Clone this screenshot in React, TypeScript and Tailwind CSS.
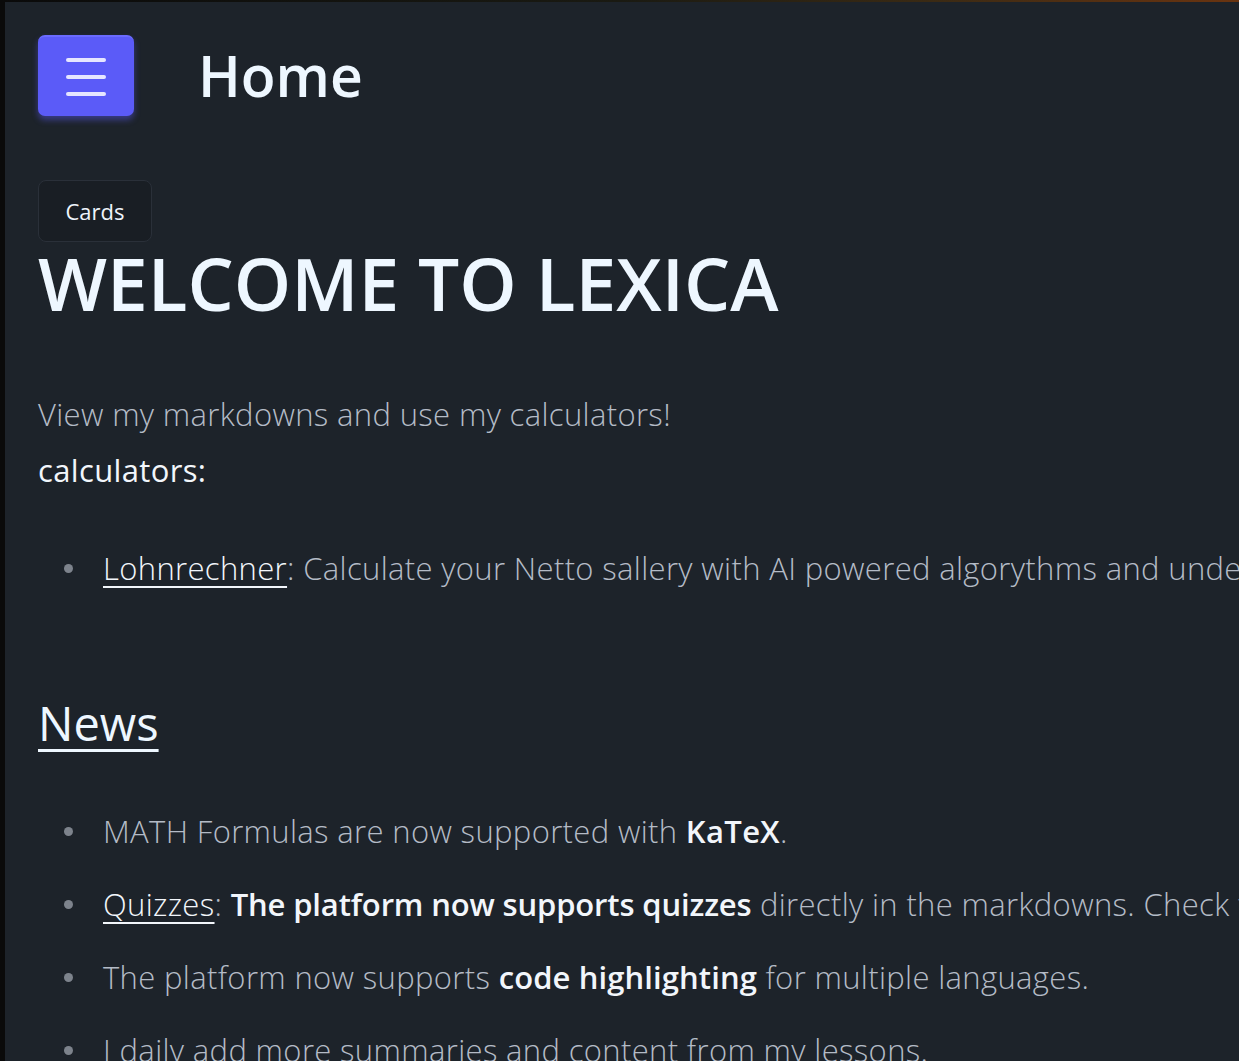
const body = "font-['Open_Sans','Noto_Sans',sans-serif]";

function Bullet({ children }: { children: React.ReactNode }) {
  return (
    <li className="flex items-center whitespace-nowrap">
      <span className="mr-[30px] ml-[26px] h-[9px] w-[9px] shrink-0 rounded-full bg-[#7d838c]" />
      <span>{children}</span>
    </li>
  );
}

export default function App() {
  return (
    <div className={`h-[1061px] w-[1239px] overflow-hidden bg-[#0a0a0a] pl-[5px] pt-[2px] ${body}`}>
      <div className="absolute left-0 top-0 h-[2px] w-full bg-[linear-gradient(90deg,#0a0a0a_0%,#1a1a12_50%,#3a2a14_75%,#6a3410_100%)]" />
      <main className="h-full bg-[#1d232a] pl-[33px] text-[#b4bbc6]">
        <header className="flex items-center pt-[33px]">
          <button className="flex h-[81px] w-[96px] flex-col items-center justify-center gap-[13px] rounded-[7px] border-t-2 border-[#6b6bff] bg-[#5b5bf8] shadow-[0_4px_6px_rgba(91,91,248,0.45)]">
            <span className="h-[4px] w-[40px] rounded-full bg-[#e6e6ff]" />
            <span className="h-[4px] w-[40px] rounded-full bg-[#e6e6ff]" />
            <span className="h-[4px] w-[40px] rounded-full bg-[#e6e6ff]" />
          </button>
          <h1 className="ml-[64px] text-[57px] font-semibold leading-none text-[#eef7ff]">Home</h1>
        </header>

        <button className="mt-[64px] h-[62px] w-[114px] rounded-lg border border-[#2a3039] bg-[#191e24] text-[22px] font-medium text-[#eef4fb]">
          Cards
        </button>

        <h2 className="mt-[2px] whitespace-nowrap text-[73px] font-semibold leading-[78px] text-[#eef7ff]">
          WELCOME TO LEXICA
        </h2>

        <div className="text-[31px] tracking-[0.35px]">
          <p className="mt-[72px] whitespace-nowrap font-light leading-[40px]">
            View my markdowns and use my calculators!
          </p>
          <p className="mt-[16px] font-medium leading-[40px] text-[#f2f6fb]">calculators:</p>

          <ul className="mt-[58px] font-light leading-[40px]">
            <Bullet>
              <a className="text-[#f2f6fb] underline decoration-2 underline-offset-[6px]">Lohnrechner</a>: Calculate your Netto sallery with AI powered algorythms and understand how taxes work
            </Bullet>
          </ul>
        </div>

        <h3 className="mt-[106px] inline-block text-[47px] font-normal leading-[58px] text-[#eef7ff] underline decoration-[3px] underline-offset-[8px]">
          News
        </h3>

        <ul className="mt-[59px] flex flex-col gap-[33px] text-[31px] font-light leading-[40px] tracking-[0.35px]">
          <Bullet>
            MATH Formulas are now supported with <b className="font-semibold text-[#f2f6fb]">KaTeX</b>.
          </Bullet>
          <Bullet>
            <a className="text-[#f2f6fb] underline decoration-2 underline-offset-[6px]">Quizzes</a>:{" "}
            <b className="font-semibold tracking-[-0.15px] text-[#f2f6fb]">The platform now supports quizzes</b> directly in the markdowns. Check them out!
          </Bullet>
          <Bullet>
            The platform now supports <b className="font-semibold tracking-[0.1px] text-[#f2f6fb]">code highlighting</b> for multiple languages.
          </Bullet>
          <Bullet>I daily add more summaries and content from my lessons.</Bullet>
        </ul>
      </main>
    </div>
  );
}
